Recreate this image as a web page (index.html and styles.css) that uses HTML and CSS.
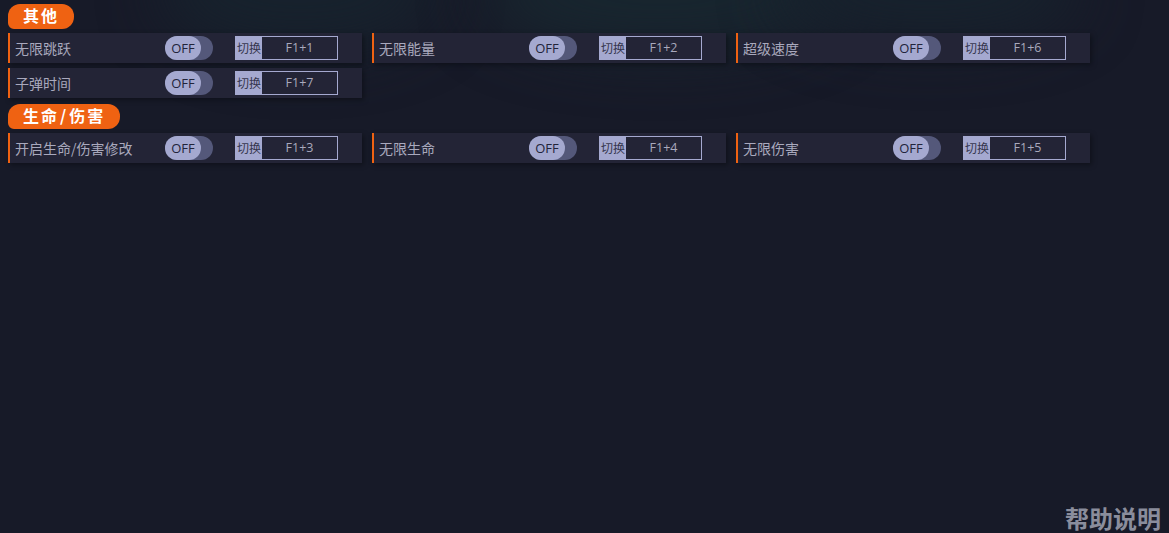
FILE: index.html
```html
<!DOCTYPE html>
<html lang="zh-CN">
<head>
<meta charset="utf-8">
<title>帮助说明</title>
<link rel="stylesheet" href="styles.css">
</head>
<body>
<div class="backdrop">
  <div class="glow glow-a"></div>
  <div class="glow glow-b"></div>
  <div class="glow glow-c"></div>
</div>
<main class="page">
  <section class="group">
    <h2 class="tag">其他</h2>
    <div class="grid">
      <div class="row"><span class="name">无限跳跃</span><span class="toggle"><span class="knob">OFF</span></span><span class="key"><span class="key-label">切换</span><span class="key-value">F1+1</span></span></div>
      <div class="row"><span class="name">无限能量</span><span class="toggle"><span class="knob">OFF</span></span><span class="key"><span class="key-label">切换</span><span class="key-value">F1+2</span></span></div>
      <div class="row"><span class="name">超级速度</span><span class="toggle"><span class="knob">OFF</span></span><span class="key"><span class="key-label">切换</span><span class="key-value">F1+6</span></span></div>
      <div class="row"><span class="name">子弹时间</span><span class="toggle"><span class="knob">OFF</span></span><span class="key"><span class="key-label">切换</span><span class="key-value">F1+7</span></span></div>
    </div>
  </section>
  <section class="group">
    <h2 class="tag">生命<span class="slash">/</span>伤害</h2>
    <div class="grid">
      <div class="row"><span class="name">开启生命/伤害修改</span><span class="toggle"><span class="knob">OFF</span></span><span class="key"><span class="key-label">切换</span><span class="key-value">F1+3</span></span></div>
      <div class="row"><span class="name">无限生命</span><span class="toggle"><span class="knob">OFF</span></span><span class="key"><span class="key-label">切换</span><span class="key-value">F1+4</span></span></div>
      <div class="row"><span class="name">无限伤害</span><span class="toggle"><span class="knob">OFF</span></span><span class="key"><span class="key-label">切换</span><span class="key-value">F1+5</span></span></div>
    </div>
  </section>
</main>
<a class="help">帮助说明</a>
</body>
</html>
```
FILE: styles.css
```css
* { box-sizing: border-box; }
html, body { height: 100%; }
body {
  margin: 0;
  background: #171a28;
  font-family: "Microsoft YaHei", "Noto Sans CJK SC", "Open Sans", sans-serif;
  overflow: hidden;
  position: relative;
}
.backdrop {
  position: absolute;
  left: 0;
  top: 0;
  width: 100%;
  height: 170px;
  overflow: hidden;
}
.glow { position: absolute; border-radius: 50%; filter: blur(30px); }
.glow-a { left: 160px; top: -70px; width: 280px; height: 120px; background: #17222d; }
.glow-b { left: 480px; top: -60px; width: 360px; height: 110px; background: #18262f; }
.glow-c { left: 780px; top: -60px; width: 300px; height: 100px; background: #17222d; }
.page {
  position: relative;
  padding: 4px 8px 0;
  display: flex;
  flex-direction: column;
  gap: 6px;
}
.group { display: block; }
.tag {
  display: table;
  margin: 0 0 4px;
  height: 25px;
  padding: 0 15px;
  background: #ef6212;
  border-radius: 12px 12px 12px 6px;
  color: #fff;
  font-size: 16px;
  font-weight: 700;
  line-height: 23px;
  letter-spacing: 2px;
}
.slash { margin: 0 1px; }
.grid {
  display: grid;
  grid-template-columns: repeat(3, 354px);
  column-gap: 10px;
  row-gap: 5px;
}
.row {
  height: 30px;
  display: flex;
  align-items: center;
  background: #232436;
  border-left: 2px solid #ef6212;
  box-shadow: 2px 2px 5px rgba(0, 0, 0, 0.35);
  padding-left: 5px;
}
.name {
  width: 150px;
  font-size: 14px;
  line-height: 30px;
  margin-top: -1px;
  color: #a9a9bd;
  white-space: nowrap;
}
.toggle {
  width: 48px;
  height: 24px;
  margin-top: -1px;
  border-radius: 12px;
  background: #54587a;
  display: block;
}
.knob {
  display: block;
  width: 36px;
  height: 24px;
  border-radius: 12px;
  background: #a5a9d0;
  color: #22243a;
  font-family: "Open Sans", sans-serif;
  font-size: 13px;
  line-height: 25px;
  text-align: center;
}
.key {
  display: flex;
  height: 24px;
  margin-left: 22px;
  margin-top: -1px;
}
.key-label {
  width: 27px;
  background: #a5a9d0;
  color: #35364e;
  font-size: 12px;
  line-height: 23px;
  padding-left: 2px;
  white-space: nowrap;
  overflow: hidden;
}
.key-value {
  width: 76px;
  border: 1px solid #a5a9d0;
  border-left: 0;
  color: #a9a9bd;
  font-family: "Open Sans", sans-serif;
  font-size: 12.5px;
  line-height: 22px;
  text-align: center;
}
.help {
  position: absolute;
  right: 8px;
  bottom: 0;
  color: #8a8d9c;
  font-size: 24px;
  font-weight: 700;
  line-height: 30px;
}
```
